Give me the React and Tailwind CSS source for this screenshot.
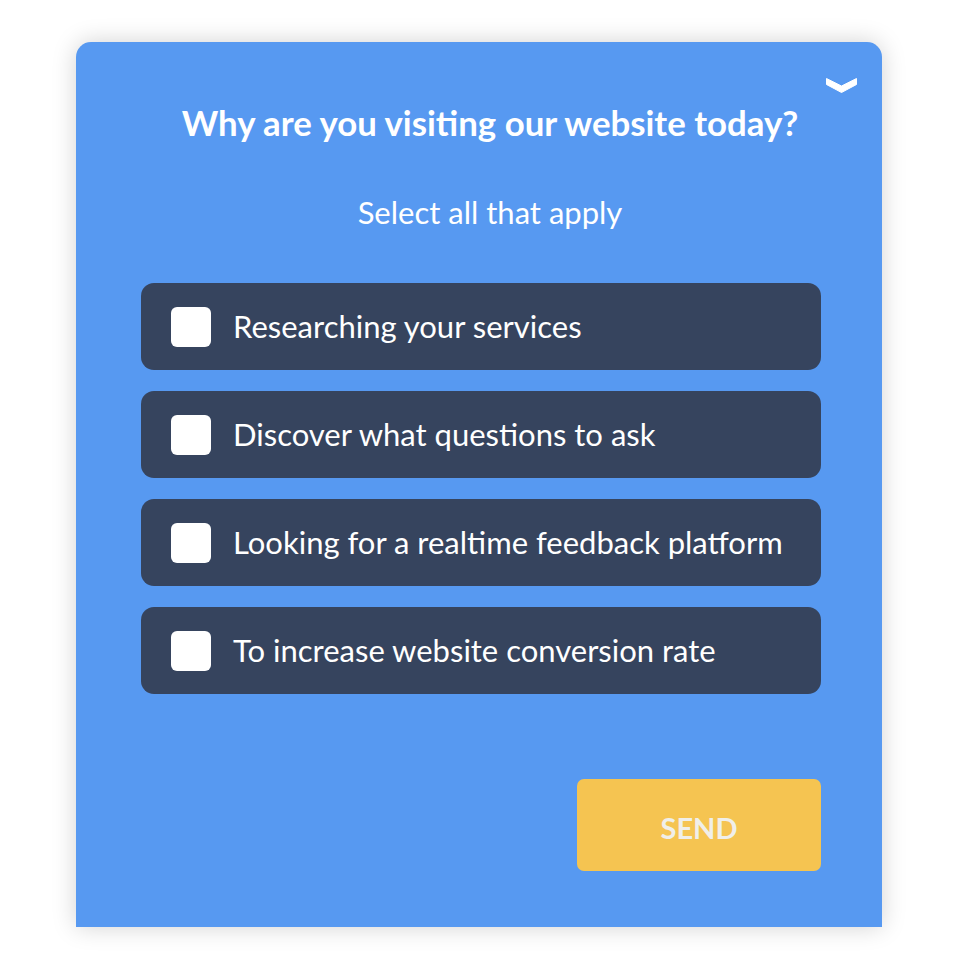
import React, { useState } from 'react';

const OPTIONS = [
  'Researching your services',
  'Discover what questions to ask',
  'Looking for a realtime feedback platform',
  'To increase website conversion rate',
];

const App = () => {
  const [checked, setChecked] = useState([]);

  const toggle = (i) => {
    setChecked((prev) => (prev.includes(i) ? prev.filter((x) => x !== i) : [...prev, i]));
  };

  return (
    <div className="w-[960px] h-[980px] bg-white pt-[42px] overflow-hidden" style={{ fontFamily: 'Lato, "Open Sans", sans-serif' }}>
      <div className="relative ml-[76px] w-[806px] h-[885px] bg-[#5799f1] rounded-t-[15px] shadow-[0_0_24px_rgba(0,0,0,0.18)]">
        {/* Collapse chevron */}
        <button type="button" className="absolute right-[25px] top-[36px]">
          <svg width="31" height="15" viewBox="0 0 31 15" className="block">
            <path d="M0.5 0.5 L15.5 8 L30.5 0.5 L30.5 6.5 L15.5 14.5 L0.5 6.5 Z" fill="#ffffff" strokeLinejoin="round" stroke="#ffffff" strokeWidth="1" />
          </svg>
        </button>

        <div className="pl-[22px]">
          <h2 className="pt-[61px] text-center text-[34.8px] leading-[40px] font-bold text-white">
            Why are you visiting our website today?
          </h2>
          <p className="mt-[51px] text-center text-[31px] leading-[36px] text-white">Select all that apply</p>
        </div>

        {/* Options */}
        <div className="mt-[53px] ml-[65px] w-[680px] flex flex-col gap-[21px]">
          {OPTIONS.map((label, i) => (
            <button
              key={label}
              type="button"
              onClick={() => toggle(i)}
              className="h-[87px] rounded-[13px] bg-[#36445e] flex items-center pl-[30px] text-left"
            >
              <span className="w-[40px] h-[40px] rounded-[6px] bg-white flex items-center justify-center shrink-0">
                {checked.includes(i) && (
                  <svg width="24" height="24" viewBox="0 0 24 24">
                    <path d="M5 12 L10 17 L19 7" stroke="#36445e" strokeWidth="3" fill="none" />
                  </svg>
                )}
              </span>
              <span className="ml-[22px] text-[31px] text-white">{label}</span>
            </button>
          ))}
        </div>

        {/* Send */}
        <div className="mt-[85px] ml-[501px] w-[244px]">
          <button
            type="button"
            className="w-full h-[92px] rounded-[7px] bg-[#f5c451] text-[#f0efe9] text-[29px] font-bold pt-[5px]"
          >
            SEND
          </button>
        </div>
      </div>
    </div>
  );
};

export default App;
